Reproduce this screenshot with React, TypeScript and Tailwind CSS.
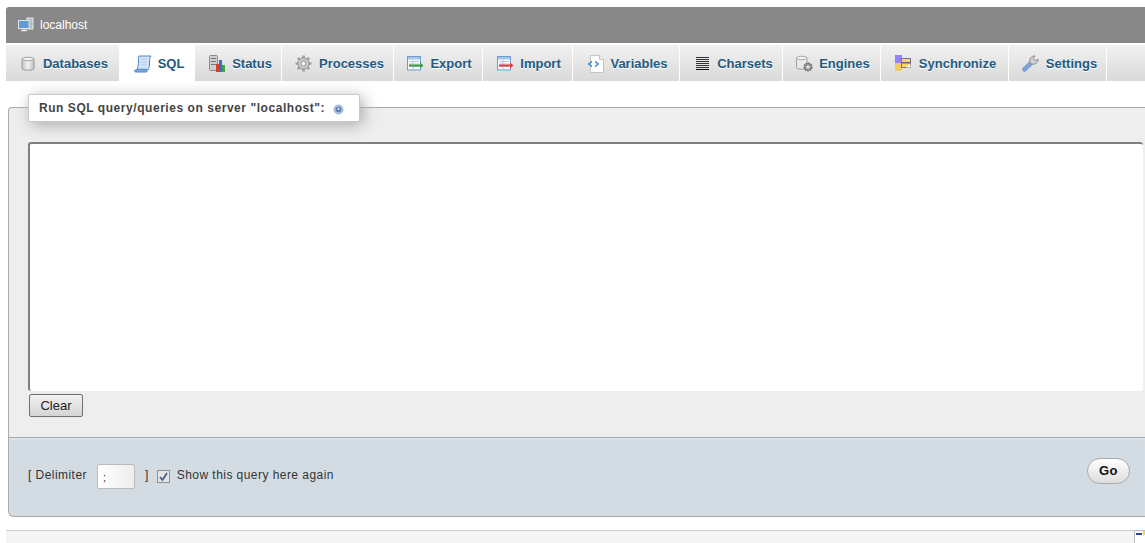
import type { ReactNode } from 'react'

const Db = () => (
  <svg width="14" height="15" viewBox="0 0 14 15">
    <defs>
      <linearGradient id="db" x1="0" x2="1" y1="0" y2="0">
        <stop offset="0" stopColor="#c4c4c4" />
        <stop offset=".5" stopColor="#f2f2f2" />
        <stop offset="1" stopColor="#bdbdbd" />
      </linearGradient>
    </defs>
    <path d="M1 3C1 .8 13 .8 13 3v9.500c0 2.200-12 2.200-12 0Z" fill="url(#db)" stroke="#9a9a9a" />
    <ellipse cx="7" cy="3" rx="5.500" ry="1.700" fill="#f4f4f4" stroke="#aaa" />
  </svg>
)
const Scroll = () => (
  <svg width="18" height="18" viewBox="0 0 18 18">
    <path d="M5 1H17C15.500 3 15.500 5 15.500 8S15 13 14 15H3C4 12 4.500 9 4.500 6S4.500 3 5 1Z" fill="#d4e3f5" stroke="#4f86c6" />
    <path d="M.5 15.500C2 14 10 14 13 14.500C12.500 15.500 12.500 16.500 13 17H1.500C1 17 .5 16.500 .5 15.500Z" fill="#7fabe0" stroke="#4f86c6" />
    <path d="M7 4h6M7 7h6M7 10h5" stroke="#b4cbe6" />
  </svg>
)
const Status = () => (
  <svg width="17" height="17" viewBox="0 0 17 17">
    <rect x=".5" y=".5" width="8" height="15" rx="1" fill="#cfcfcf" stroke="#8a8a8a" />
    <rect x="2" y="3" width="5" height="1" fill="#777" />
    <rect x="2" y="6" width="5" height="1" fill="#777" />
    <rect x="2" y="9" width="5" height="1" fill="#777" />
    <rect x="7" y="9" width="3" height="8" fill="#d8402e" />
    <rect x="10" y="5" width="3" height="12" fill="#2f6fd0" />
    <rect x="13" y="10" width="3" height="7" fill="#3fa544" />
  </svg>
)
const Gear = () => (
  <svg width="17" height="17" viewBox="0 0 17 17">
    <g stroke="#a3a3a3" strokeWidth="2.600">
      <path d="M8.500.5v16M.5 8.500h16M2.800 2.800l11.400 11.400M14.200 2.800 2.800 14.200" />
    </g>
    <circle cx="8.500" cy="8.500" r="5.600" fill="#cdcdcd" stroke="#8f8f8f" />
    <circle cx="8.500" cy="8.500" r="2.600" fill="#f1f1f1" stroke="#8f8f8f" />
  </svg>
)
const Sheet = ({ color }: { color: string }) => (
  <svg width="17" height="15" viewBox="0 0 17 15">
    <rect x=".5" y=".5" width="13" height="13.500" fill="#f5f8fc" stroke="#6f9bd1" />
    <rect x="1" y="1" width="12" height="2.500" fill="#a9c6e8" />
    <path d="M2 5.500h10M2 8h10M2 10.500h10M6 4v9" stroke="#b6c9de" />
    <path d="M2 8.500h11V6.500l3.500 3L13 12.500v-2H2Z" fill={color} />
  </svg>
)
const Vars = () => (
  <svg width="17" height="18" viewBox="0 0 17 18">
    <path d="M3.500.5h9l4 4v13h-13Z" fill="#fff" stroke="#c4c4c4" />
    <path d="M12.500.5v4h4" fill="#eee" stroke="#c4c4c4" />
    <path d="M5 5.500.5 9 5 12.500V10.500L3 9 5 7.500ZM8 5.500 12.500 9 8 12.500V10.500L10 9 8 7.500Z" fill="#4a90e2" />
  </svg>
)
const Lines = () => (
  <svg width="13" height="13" viewBox="0 0 13 13">
    <path d="M0 .5h13M0 2.500h13M0 4.500h13M0 6.500h13M0 8.500h13M0 10.500h13" stroke="#333" />
    <path d="M0 12.500h13" stroke="#111" />
  </svg>
)
const Engine = () => (
  <svg width="17" height="17" viewBox="0 0 17 17">
    <path d="M.5 3C.5.800 11 .800 11 3v9.500c0 2.200-10.500 2.200-10.500 0Z" fill="#e8e8e8" stroke="#a3a3a3" />
    <ellipse cx="5.700" cy="3" rx="5" ry="1.700" fill="#f5f5f5" stroke="#b0b0b0" />
    <circle cx="12" cy="12" r="3.600" fill="#aaa" stroke="#5f5f5f" strokeWidth="1.800" strokeDasharray="1.600 .8" />
    <circle cx="12" cy="12" r="1.300" fill="#eee" />
  </svg>
)
const Sync = () => (
  <svg width="17" height="17" viewBox="0 0 17 17">
    <rect x="0" y="0" width="7" height="8" fill="#8f87ee" />
    <rect x="0" y="8" width="7" height="8" fill="#f3cd5a" />
    <rect x="6.500" y="3.500" width="9" height="9" fill="#f6d66b" stroke="#777" />
    <rect x="7" y="7" width="8" height="1.500" fill="#666" />
    <path d="M11 12.500h4.500V9Z" fill="#fff" />
  </svg>
)
const Wrench = () => (
  <svg width="17" height="17" viewBox="0 0 17 17">
    <path d="M.9 13.500 8 6.500l2.500 2.500-7 7c-1.500 1-3.500-1-2.600-2.500Z" fill="#7ea6dc" stroke="#5b86c0" />
    <path d="M8 7.500C7 4 9.500 .5 13 1l-2 2.500 2.500 2.500L16 4c.5 3.500-3 6-6.500 5Z" fill="#d0d0d0" stroke="#8a8a8a" />
  </svg>
)
const Host = () => (
  <svg width="16" height="16" viewBox="0 0 16 16">
    <rect x="9" y="1" width="6" height="11" fill="#b9bec4" stroke="#e4e4e4" />
    <rect x="12" y="6" width="2" height="1" fill="#7fdc7f" />
    <rect x=".5" y="3.500" width="10.500" height="8" fill="#5f9bd6" stroke="#dbe3ea" />
    <path d="M3 13.500h6M6 11.500v2" stroke="#e4e4e4" strokeWidth="1.500" />
  </svg>
)

const tabs: { label: string; icon: ReactNode; width: string; active?: boolean; nudge?: string }[] = [
  { label: 'Databases', icon: <Db />, width: 'w-[113px]' },
  { label: 'SQL', icon: <Scroll />, width: 'w-[74px]', active: true, nudge: 'pl-[2px]' },
  { label: 'Status', icon: <Status />, width: 'w-[86px]', nudge: 'pl-[2px]' },
  { label: 'Processes', icon: <Gear />, width: 'w-[111px]', nudge: 'pl-[2px]' },
  { label: 'Export', icon: <Sheet color="#3f9b3f" />, width: 'w-[88px]' },
  { label: 'Import', icon: <Sheet color="#e5383b" />, width: 'w-[89px]' },
  { label: 'Variables', icon: <Vars />, width: 'w-[106px]' },
  { label: 'Charsets', icon: <Lines />, width: 'w-[102px]', nudge: 'pl-[2px]' },
  { label: 'Engines', icon: <Engine />, width: 'w-[97px]' },
  { label: 'Synchronize', icon: <Sync />, width: 'w-[127px]' },
  { label: 'Settings', icon: <Wrench />, width: 'w-[97px]', nudge: 'pl-[2px]' },
]

export default function App() {
  return (
    <div className="relative h-[543px] w-[1145px] overflow-hidden bg-white pl-[6px] pt-[7px] font-['Liberation_Sans',Arial,sans-serif] text-[12px] text-[#444]">
      {/* Server bar */}
      <div className="flex h-[36px] items-center gap-[6px] rounded-tl-[3px] bg-[#888] pl-[12px] text-[12px] text-white">
        <Host />
        localhost
      </div>

      {/* Tabs */}
      <nav className="mt-[2px] flex h-[36px] gap-px">
        {tabs.map(t => (
          <div
            key={t.label}
            className={`flex h-full ${t.width} ${t.nudge ?? ''} items-center justify-center gap-[8px] pt-[1px] text-[13px] font-bold text-[#235a81] [text-shadow:0_1px_0_#fff] ${
              t.active ? 'bg-white' : 'bg-gradient-to-b from-[#f2f2f2] to-[#d9d9d9]'
            }`}
          >
            <span className="flex h-[18px] w-[18px] translate-x-[2px] items-center justify-center">{t.icon}</span>
            {t.label}
          </div>
        ))}
        <div className="h-full flex-1 bg-gradient-to-b from-[#f2f2f2] to-[#d9d9d9]" />
      </nav>

      {/* Query fieldset */}
      <div className="relative ml-[2px] mt-[26px] h-[330px] rounded-tl-[4px] border-l border-t border-[#aaa] bg-[#eee] pl-[19px] pt-[34px]">
        <div className="absolute -top-[14px] left-[19px] flex h-[28px] w-[332px] items-center gap-[8px] rounded-[2px] border border-[#c8c8c8] bg-white pl-[10px] text-[12px] font-bold tracking-[0.55px] text-[#444] shadow-[3px_3px_15px_#aaa]">
          Run SQL query/queries on server "localhost":
          <svg width="11" height="11" viewBox="0 0 11 11" className="mt-[3px]">
            <circle cx="5.500" cy="5.500" r="5" fill="#a9bedc" />
            <circle cx="5.500" cy="5.500" r="2.800" fill="#5a82b8" />
            <circle cx="5.500" cy="5" r="1.100" fill="#e6edf6" />
          </svg>
        </div>
        <div className="mr-[2px] h-[249px] rounded-[3px] border-l-2 border-t-2 border-[#808080] bg-white" />
        <button className="ml-px mt-[3px] flex h-[23px] w-[54px] items-center justify-center rounded-[2px] border border-[#707070] bg-gradient-to-b from-[#f2f2f2] to-[#d4d4d4] text-[13px] text-[#222]">
          Clear
        </button>
      </div>

      {/* Bottom tool bar */}
      <div className="ml-[2px] flex h-[80px] items-center justify-between rounded-bl-[6px] border-b border-l border-t border-[#aaa] bg-[#d3dce3] pb-[4px] pl-[19px] pr-[15px] shadow-[inset_0_2px_2px_#dde4ea]">
        <div className="flex items-center text-[12px] tracking-[0.45px] text-[#333]">
          <span>[ Delimiter</span>
          <div className="ml-[10px] mt-[2px] flex h-[25px] w-[38px] items-end rounded-[2px] border border-[#bbb] bg-gradient-to-r from-white to-[#eee] pb-[5px] pl-[5px] text-[11px] leading-none">
            ;
          </div>
          <span className="ml-[10px]">]</span>
          <span className="ml-[8px] mt-[2px] flex h-[13px] w-[13px] items-center justify-center border border-[#8e8f8f] bg-[#e4e4e4]">
            <svg width="11" height="11" viewBox="0 0 11 11">
              <path d="M2 6l2.500 3L9 2" fill="none" stroke="#4a5f97" strokeWidth="1.800" />
            </svg>
          </span>
          <span className="ml-[7px]">Show this query here again</span>
        </div>
        <button className="-mt-[8px] h-[26px] w-[43px] rounded-[13px] border border-[#aaa] bg-gradient-to-b from-white to-[#ddd] text-[13px] font-bold tracking-[0.5px] text-[#111]">
          Go
        </button>
      </div>

      {/* Console bar */}
      <div className="mt-[13px] h-[14px] border-t border-[#ccc] bg-[#f5f5f5]" />
      <div className="absolute bottom-0 right-0 h-[13px] w-[11px] border-l border-t border-[#bbb] bg-white">
        <div className="ml-px mt-[2px] h-[2px] w-[6px] bg-[#2b4a8b]" />
        <div className="absolute right-0 top-0 h-[4px] w-[2px] bg-[#f2d53c]" />
      </div>
    </div>
  )
}
